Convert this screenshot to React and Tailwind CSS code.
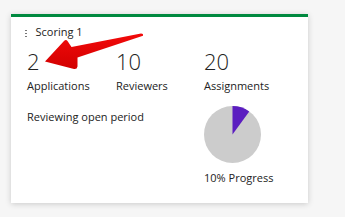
export default function App() {
  const font = { fontFamily: '"Open Sans", "Noto Sans", sans-serif' };
  return (
    <div className="w-[345px] h-[217px] bg-[#f6f6f6] relative overflow-hidden" style={font}>
      <div className="absolute left-[11px] top-[14px] w-[297px] h-[189px] bg-white border-t-[3px] border-[#00893f] shadow-[0_1px_6px_rgba(0,0,0,0.18)] text-[#222]">
        <div className="pt-[7px] pl-[14px] flex items-center h-[23px]">
          <div className="flex flex-col gap-[1.5px] mr-[9px] mt-[3px]">
            <div className="w-[1.5px] h-[1.5px] bg-[#777]"></div>
            <div className="w-[1.5px] h-[1.5px] bg-[#777]"></div>
            <div className="w-[1.5px] h-[1.5px] bg-[#777]"></div>
          </div>
          <span className="text-[11px] leading-[16px]">Scoring 1</span>
        </div>
        <div className="grid grid-cols-[89px_88px_100px] pl-[16px] mt-[7px]">
          <div>
            <div className="text-[22px] leading-[28px] font-light">2</div>
            <div className="text-[11px] leading-[16px] mt-[3px]">Applications</div>
          </div>
          <div>
            <div className="text-[22px] leading-[28px] font-light">10</div>
            <div className="text-[11px] leading-[16px] mt-[3px]">Reviewers</div>
          </div>
          <div>
            <div className="text-[22px] leading-[28px] font-light">20</div>
            <div className="text-[11px] leading-[16px] mt-[3px]">Assignments</div>
          </div>
        </div>
        <div className="grid grid-cols-[177px_100px] pl-[16px] mt-[12px]">
          <div className="text-[11px] leading-[16px] mt-[3px]">Reviewing open period</div>
          <div>
            <svg width="57" height="57" viewBox="0 0 57 57" className="block">
              <circle cx="28.5" cy="28.5" r="28.5" fill="#cccccc" />
              <path d="M28.5 28.5 L28.5 0 A28.5 28.5 0 0 1 45.25 5.44 Z" fill="#5b1dc0" />
            </svg>
            <div className="text-[11px] leading-[16px] mt-[7px]">10% Progress</div>
          </div>
        </div>
      </div>
      <svg className="absolute left-0 top-0 pointer-events-none" width="345" height="217" viewBox="0 0 345 217">
        <defs>
          <linearGradient id="ar" x1="0" y1="0" x2="0" y2="1">
            <stop offset="0" stopColor="#f20a0a" />
            <stop offset="1" stopColor="#d20000" />
          </linearGradient>
        </defs>
        <path
          d="M45 61.5 L64 41 Q66 39 67.5 41 L71.5 47 L141 33.5 Q143.5 33.5 143 35.8 L77.5 57.5 L77.5 66.5 Q77 69.5 74 69 Z"
          fill="url(#ar)"
        />
      </svg>
    </div>
  );
}
